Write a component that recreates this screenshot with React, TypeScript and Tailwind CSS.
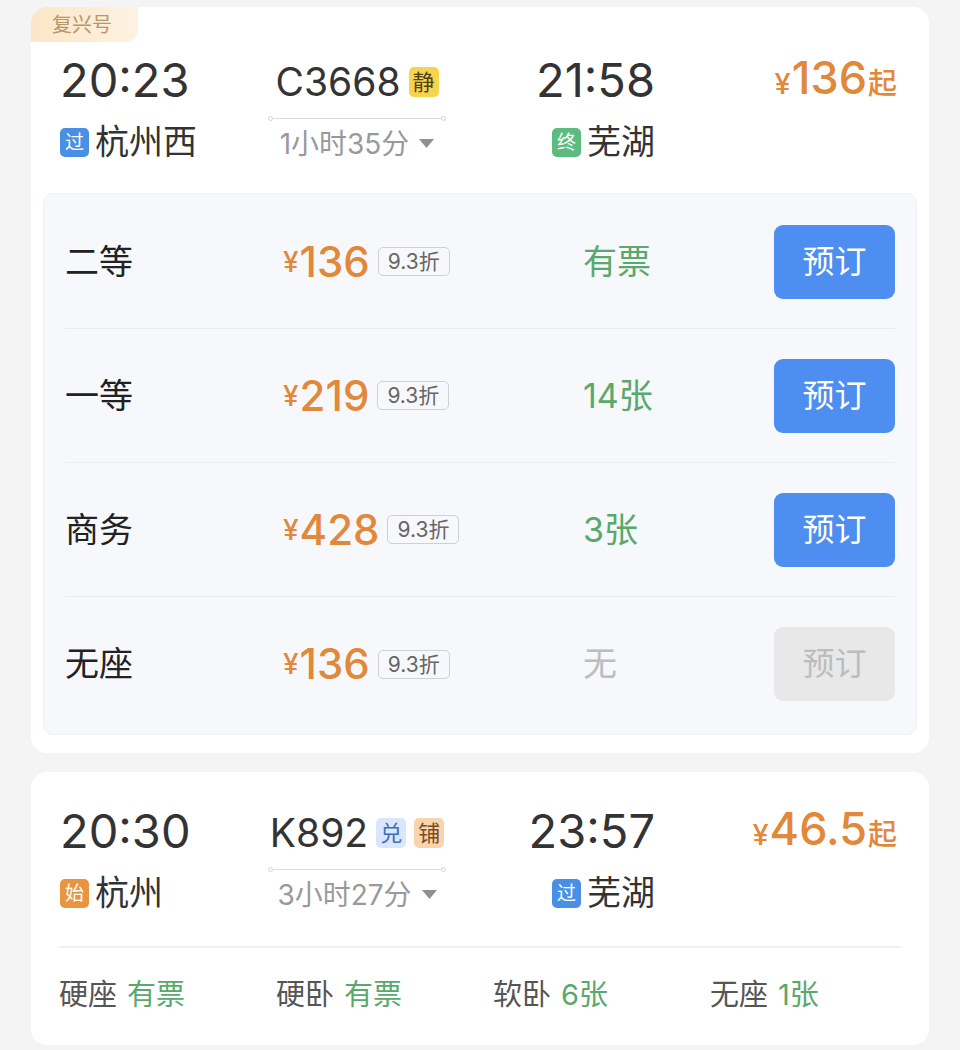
import React from "react";

const FONT = "font-['Inter','Noto_Sans_CJK_SC',sans-serif]";

function StationTag({ label, cls }: { label: string; cls: string }) {
  return (
    <span
      className={`flex h-[29px] w-[29px] shrink-0 items-center justify-center rounded-[5px] text-[19px] leading-none text-white ${cls}`}
    >
      {label}
    </span>
  );
}

function Station({ tag, tagCls, name }: { tag: string; tagCls: string; name: string }) {
  return (
    <div className="flex h-[36px] items-center gap-[6px]">
      <StationTag label={tag} cls={tagCls} />
      <span className="text-[34px] leading-[36px] text-[#333]">{name}</span>
    </div>
  );
}

function TrainTag({ label, cls }: { label: string; cls: string }) {
  return (
    <span
      className={`ml-[8px] flex h-[30px] w-[30px] items-center justify-center rounded-[5px] text-[22px] leading-none ${cls}`}
    >
      {label}
    </span>
  );
}

function Triangle() {
  return (
    <svg width="15" height="10" viewBox="0 0 15 10" className="ml-[10px]">
      <path d="M0 0 L15 0 L7.5 9 Z" fill="#8f8f8f" />
    </svg>
  );
}

function Line() {
  return (
    <div className="flex w-[178px] items-center">
      <span className="h-[5px] w-[5px] rounded-full border border-[#d5d5d5] bg-white" />
      <span className="h-px flex-1 bg-[#dcdcdc]" />
      <span className="h-[5px] w-[5px] rounded-full border border-[#d5d5d5] bg-white" />
    </div>
  );
}

type HeaderProps = {
  dep: string;
  depTag: string;
  depTagCls: string;
  depStation: string;
  train: string;
  tags: { label: string; cls: string }[];
  duration: string;
  arr: string;
  arrTag: string;
  arrTagCls: string;
  arrStation: string;
  price: string;
};

function Header(p: HeaderProps) {
  return (
    <div className="flex flex-col pl-[29px] pr-[32px]">
      <div className="flex h-[48px] items-start">
        <div className="w-[208px] text-[47px] leading-[48px] text-[#333]">{p.dep}</div>
        <div className="flex w-[178px] items-center justify-center pt-[2px]">
          <span className="text-[39px] leading-[48px] text-[#333]">{p.train}</span>
          {p.tags.map((t) => (
            <TrainTag key={t.label} label={t.label} cls={t.cls} />
          ))}
        </div>
        <div className="flex w-[209px] justify-end text-[47px] leading-[48px] text-[#333]">{p.arr}</div>
        <div className="flex flex-1 items-baseline justify-end leading-[44px] text-[#e2883b]">
          <span className="text-[29px] font-medium">¥</span>
          <span className="ml-[1px] text-[45px] font-medium">{p.price}</span>
          <span className="ml-[1px] text-[29px] font-medium">起</span>
        </div>
      </div>
      <div className="mt-[20px] flex items-start">
        <div className="w-[208px]">
          <Station tag={p.depTag} tagCls={p.depTagCls} name={p.depStation} />
        </div>
        <div className="-mt-[8px] flex w-[178px] flex-col items-center">
          <Line />
          <div className="mt-[5px] flex items-center">
            <span className="text-[28px] leading-[36px] text-[#999]">{p.duration}</span>
            <Triangle />
          </div>
        </div>
        <div className="flex w-[209px] justify-end">
          <Station tag={p.arrTag} tagCls={p.arrTagCls} name={p.arrStation} />
        </div>
      </div>
    </div>
  );
}

type Seat = { name: string; price: string; avail: string; ok: boolean };

function SeatRow({ s, last }: { s: Seat; last: boolean }) {
  return (
    <div
      className={`mx-[21px] flex h-[134px] items-center ${last ? "" : "border-b border-[#e8ebef]"}`}
    >
      <div className="w-[218px] text-[34px] leading-none text-[#222]">{s.name}</div>
      <div className="flex w-[300px] items-center">
        <span className="text-[28px] font-medium leading-none text-[#e2883b]">¥</span>
        <span className="ml-[1px] text-[42px] font-medium leading-none text-[#e2883b]">{s.price}</span>
        <span className="ml-[8px] flex h-[29px] items-center rounded-[5px] border border-[#cdd1d6] px-[9px] text-[21px] leading-none text-[#666]">
          9.3折
        </span>
      </div>
      <div className={`flex-1 text-[34px] leading-none ${s.ok ? "text-[#5aa86b]" : "text-[#bdbdbd]"}`}>
        {s.avail}
      </div>
      <div
        className={`flex h-[74px] w-[121px] items-center justify-center rounded-[9px] text-[32px] leading-none ${
          s.ok ? "bg-[#4d8ef0] text-white" : "bg-[#e8e8e8] text-[#bcbcbc]"
        }`}
      >
        预订
      </div>
    </div>
  );
}

const seats: Seat[] = [
  { name: "二等", price: "136", avail: "有票", ok: true },
  { name: "一等", price: "219", avail: "14张", ok: true },
  { name: "商务", price: "428", avail: "3张", ok: true },
  { name: "无座", price: "136", avail: "无", ok: false },
];

const bottom = [
  { n: "硬座", v: "有票" },
  { n: "硬卧", v: "有票" },
  { n: "软卧", v: "6张" },
  { n: "无座", v: "1张" },
];

export default function App() {
  return (
    <div className={`min-h-[1050px] w-[960px] bg-[#f4f4f4] pt-[7px] ${FONT}`}>
      <div className="ml-[31px] w-[898px] rounded-[16px] bg-white pb-[18px]">
        <div className="flex h-[35px] w-[107px] items-center rounded-tl-[16px] rounded-br-[12px] bg-gradient-to-r from-[#fce6c6] to-[#fdf2e2] pl-[21px] text-[20px] leading-none text-[#b8966a]">
          复兴号
        </div>
        <div className="pt-[14px]">
          <Header
            dep="20:23"
            depTag="过"
            depTagCls="bg-[#4a8fe6]"
            depStation="杭州西"
            train="C3668"
            tags={[{ label: "静", cls: "bg-[#f6d44e] text-[#4f4216]" }]}
            duration="1小时35分"
            arr="21:58"
            arrTag="终"
            arrTagCls="bg-[#5dbb80]"
            arrStation="芜湖"
            price="136"
          />
        </div>
        <div className="mx-[12px] mt-[31px] rounded-[10px] border border-[#edf0f4] bg-[#f6f8fb] pb-[3px] pt-[1px]">
          {seats.map((s, i) => (
            <SeatRow key={i} s={s} last={i === seats.length - 1} />
          ))}
        </div>
      </div>

      <div className="ml-[31px] mt-[19px] w-[898px] rounded-[16px] bg-white pt-[35px]">
        <Header
          dep="20:30"
          depTag="始"
          depTagCls="bg-[#e9953f]"
          depStation="杭州"
          train="K892"
          tags={[
            { label: "兑", cls: "bg-[#d9e6fb] text-[#3f6db5]" },
            { label: "铺", cls: "bg-[#f8d3ae] text-[#7b4b1f]" },
          ]}
          duration="3小时27分"
          arr="23:57"
          arrTag="过"
          arrTagCls="bg-[#4a8fe6]"
          arrStation="芜湖"
          price="46.5"
        />
        <div className="mx-[28px] mt-[33px] h-[2px] bg-[#f0f0f0]" />
        <div className="grid grid-cols-[217px_217px_217px_1fr] pb-[30px] pl-[28px] pt-[27px] text-[29px] leading-[40px]">
          {bottom.map((b) => (
            <div key={b.n + b.v} className="flex gap-[10px]">
              <span className="text-[#555]">{b.n}</span>
              <span className="text-[#5aa86b]">{b.v}</span>
            </div>
          ))}
        </div>
      </div>
    </div>
  );
}
